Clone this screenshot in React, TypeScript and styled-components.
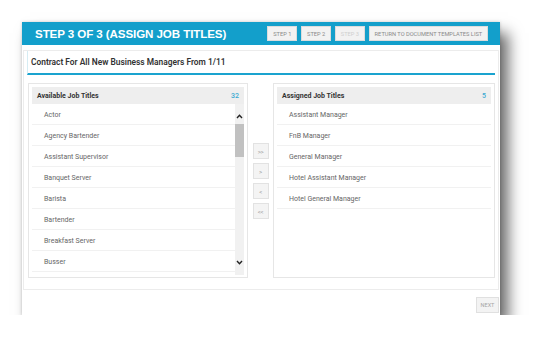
import React from "react";
import styled, { createGlobalStyle } from "styled-components";

const GlobalStyle = createGlobalStyle`
  body {
    margin: 0;
    background: #fff;
    font-family: Roboto, "Liberation Sans", sans-serif;
  }
`;

const Page = styled.div`
  padding: 22px 0 0 22px;
`;

const Window = styled.div`
  width: 478px;
  background: #fff;
  box-shadow: 8px 11px 14px rgba(0, 0, 0, 0.6), 0 0 3px rgba(0, 0, 0, 0.18);
`;

const TopBar = styled.div`
  height: 23px;
  background: #139fcb;
  display: flex;
  align-items: center;
  padding: 0 12px 0 13px;
`;

const Heading = styled.h1`
  margin: 0;
  flex: 1;
  color: #fff;
  font-family: "Liberation Sans", Arial, sans-serif;
  font-weight: 700;
  font-size: 11.6px;
  letter-spacing: -0.1px;
`;

const StepButtons = styled.div`
  display: flex;
  gap: 4px;
`;

const StepButton = styled.button<{ $off?: boolean }>`
  height: 15px;
  padding: 0 4.8px;
  border: 1px solid #dcdcdc;
  background: #f2f2f2;
  color: ${(p) => (p.$off ? "#cfcfcf" : "#8a8a8a")};
  font-family: Roboto, sans-serif;
  font-size: 5.7px;
  white-space: nowrap;
`;

const Content = styled.div`
  padding: 5px 1px 2px 1px;
`;

const Card = styled.div`
  border: 1px solid #ececec;
  padding: 0 3px 11px 3px;
`;

const CardTitle = styled.div`
  height: 22px;
  display: flex;
  align-items: center;
  padding-left: 3px;
  border-left: 1px solid #d6ecf3;
  border-bottom: 2px solid #1aa3cf;
  color: #333;
  font-weight: 600;
  font-size: 8.4px;
`;

const Lists = styled.div`
  margin: 8px 0 0 1px;
  display: flex;
  align-items: stretch;
`;

const Panel = styled.div<{ $w: number }>`
  width: ${(p) => p.$w}px;
  border: 1px solid #e6e6e6;
  padding: 3px 3px 1px 3px;
  box-sizing: border-box;
  height: 195px;
`;

const PanelHead = styled.div`
  height: 17px;
  display: flex;
  align-items: center;
  justify-content: space-between;
  background: #eeeeee;
  padding: 0 5px 0 5px;
  font-weight: 700;
  font-size: 7px;
  color: #333;
`;

const Count = styled.span`
  color: #3aa9d2;
  font-weight: 500;
`;

const ListBody = styled.div`
  display: flex;
  height: 171px;
`;

const Rows = styled.ul`
  flex: 1;
  margin: 0;
  padding: 0;
  list-style: none;
  overflow: hidden;
`;

const Row = styled.li`
  height: 21px;
  box-sizing: border-box;
  display: flex;
  align-items: center;
  padding: 2px 0 0 12px;
  border-bottom: 1px solid #f1f1f1;
  font-size: 7px;
  color: #666;
`;

const ScrollBar = styled.div`
  width: 9px;
  background: #f1f1f1;
  display: flex;
  flex-direction: column;
  align-items: center;
`;

const ScrollArrow = styled.div<{ $pad: string }>`
  height: 20px;
  box-sizing: border-box;
  padding: ${(p) => p.$pad};
  display: flex;
  justify-content: center;
`;

const Thumb = styled.div`
  width: 9px;
  height: 33px;
  background: #c1c1c1;
`;

const Spacer = styled.div`
  flex: 1;
`;

const Middle = styled.div`
  width: 25px;
  display: flex;
  flex-direction: column;
  align-items: center;
  justify-content: center;
  gap: 4px;
  padding-top: 1px;
`;

const MoveButton = styled.button`
  width: 16px;
  height: 16px;
  padding: 0;
  border: 1px solid #e2e2e2;
  background: #f4f4f4;
  color: #999;
  font-size: 6px;
  font-family: Roboto, sans-serif;
  letter-spacing: -0.3px;
`;

const Footer = styled.div`
  display: flex;
  justify-content: flex-end;
  padding-top: 7px;
`;

const NextButton = styled.button`
  width: 23px;
  height: 16px;
  padding: 0;
  border: 1px solid #e0e0e0;
  background: #f3f3f3;
  color: #a5a5a5;
  font-size: 5.5px;
  font-family: Roboto, sans-serif;
`;

const Chevron = ({ up }: { up?: boolean }) => (
  <svg width="7" height="5" viewBox="0 0 7 5">
    <path
      d={up ? "M1 4 L3.5 1.3 L6 4" : "M1 1 L3.5 3.7 L6 1"}
      fill="none"
      stroke="#222"
      strokeWidth="1.4"
    />
  </svg>
);

const available = [
  "Actor",
  "Agency Bartender",
  "Assistant Supervisor",
  "Banquet Server",
  "Barista",
  "Bartender",
  "Breakfast Server",
  "Busser",
];

const assigned = [
  "Assistant Manager",
  "FnB Manager",
  "General Manager",
  "Hotel Assistant Manager",
  "Hotel General Manager",
];

export default function App() {
  return (
    <Page>
      <GlobalStyle />
      <Window>
        <TopBar>
          <Heading>STEP 3 OF 3 (ASSIGN JOB TITLES)</Heading>
          <StepButtons>
            <StepButton>STEP 1</StepButton>
            <StepButton>STEP 2</StepButton>
            <StepButton $off>STEP 3</StepButton>
            <StepButton>RETURN TO DOCUMENT TEMPLATES LIST</StepButton>
          </StepButtons>
        </TopBar>
        <Content>
          <Card>
            <CardTitle>Contract For All New Business Managers From 1/11</CardTitle>
            <Lists>
              <Panel $w={220}>
                <PanelHead>
                  Available Job Titles <Count>32</Count>
                </PanelHead>
                <ListBody>
                  <Rows>
                    {available.map((t) => (
                      <Row key={t}>{t}</Row>
                    ))}
                  </Rows>
                  <ScrollBar>
                    <ScrollArrow $pad="10px 0 0">
                      <Chevron up />
                    </ScrollArrow>
                    <Thumb />
                    <Spacer />
                    <ScrollArrow $pad="5px 0 0">
                      <Chevron />
                    </ScrollArrow>
                  </ScrollBar>
                </ListBody>
              </Panel>
              <Middle>
                <MoveButton>&gt;&gt;</MoveButton>
                <MoveButton>&gt;</MoveButton>
                <MoveButton>&lt;</MoveButton>
                <MoveButton>&lt;&lt;</MoveButton>
              </Middle>
              <Panel $w={222}>
                <PanelHead>
                  Assigned Job Titles <Count>5</Count>
                </PanelHead>
                <Rows>
                  {assigned.map((t) => (
                    <Row key={t}>{t}</Row>
                  ))}
                </Rows>
              </Panel>
            </Lists>
          </Card>
          <Footer>
            <NextButton>NEXT</NextButton>
          </Footer>
        </Content>
      </Window>
    </Page>
  );
}
